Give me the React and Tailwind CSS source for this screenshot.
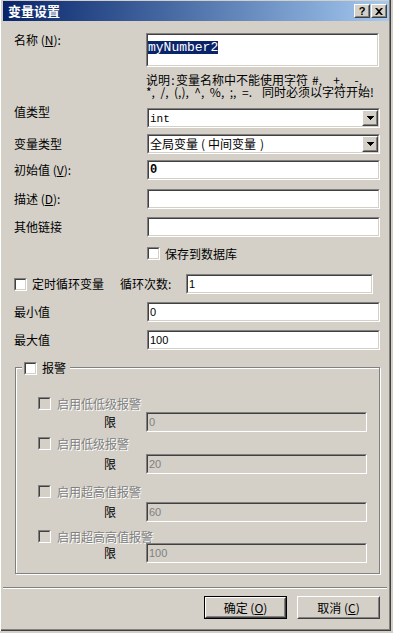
import React from "react";

const Sunken = ({ className = "", bg = "bg-white", innerClass = "", children }) => (
  <div
    className={`shrink-0 border border-t-[#808080] border-l-[#808080] border-r-white border-b-white ${className}`}
  >
    <div
      className={`w-full h-full border border-t-[#404040] border-l-[#404040] border-r-[#d4d0c8] border-b-[#d4d0c8] ${bg} ${innerClass}`}
    >
      {children}
    </div>
  </div>
);

const Raised = ({ className = "", children }) => (
  <div
    className={`shrink-0 bg-[#d4d0c8] border border-t-white border-l-white border-r-[#404040] border-b-[#404040] ${className}`}
  >
    <div className="w-full h-full flex items-center justify-center border border-t-[#d4d0c8] border-l-[#d4d0c8] border-r-[#808080] border-b-[#808080]">
      {children}
    </div>
  </div>
);

const Check = ({ disabled }) => (
  <Sunken className="w-[13px] h-[13px]" bg={disabled ? "bg-[#d4d0c8]" : "bg-white"} />
);

const Arrow = () => (
  <svg width="7" height="4" viewBox="0 0 7 4">
    <path d="M0 0h7v1H0zM1 1h5v1H1zM2 2h3v1H2zM3 3h1v1H3z" fill="#000" />
  </svg>
);

const Combo = ({ children }) => (
  <Sunken className="w-[233px] h-[20px]" innerClass="flex items-center">
    <div className="flex-1 pl-[1px] leading-[14px] whitespace-nowrap">{children}</div>
    <Raised className="w-[16px] h-[16px]">
      <Arrow />
    </Raised>
  </Sunken>
);

const Edit = ({ children, className = "w-[233px]", disabled }) => (
  <Sunken
    className={`h-[20px] ${className}`}
    bg={disabled ? "bg-[#d4d0c8]" : "bg-white"}
    innerClass="flex items-center pl-[1px]"
  >
    {children}
  </Sunken>
);

const sans = "[font-family:'Liberation_Sans',Arial,sans-serif] text-[11px] leading-[13px]";
const mono = "[font-family:'Liberation_Mono',monospace]";
const grey = "text-[#808080] [text-shadow:1px_1px_0_#ffffff]";

const Row = ({ label, mt, children }) => (
  <div className={`flex items-center h-[20px] ${mt}`}>
    <div className="w-[147px] pl-[14px] shrink-0">{label}</div>
    {children}
  </div>
);

const Alarm = ({ label, value, mt, limitMt }) => (
  <>
    <div className={`flex items-center h-[13px] ${mt}`}>
      <Check disabled />
      <span className={`ml-[6px] ${grey}`}>{label}</span>
    </div>
    <div className={`flex items-center h-[20px] ${limitMt}`}>
      <div className="w-[108px] pl-[66px] shrink-0">限</div>
      <Edit className="w-[221px]" disabled>
        <span className={`${sans} text-[#808080]`}>{value}</span>
      </Edit>
    </div>
  </>
);

export default function App() {
  return (
    <div className="w-[393px] h-[633px] bg-[#d4d0c8] overflow-hidden [font-family:'Noto_Sans_CJK_SC','Noto_Sans',sans-serif] text-[12px] leading-[14px] text-black">
      <div className="w-[391px] h-[631px] flex flex-col shadow-[inset_1px_0_0_#ffffff,inset_-1px_-1px_0_#404040,inset_-2px_-2px_0_#808080]">
        {/* title bar */}
        <div className="ml-[3px] mt-[1px] w-[386px] h-[20px] shrink-0 bg-linear-to-r from-[#0a246a] to-[#a6caf0] flex items-center pl-[5px] pr-[2px]">
          <span className="text-white font-bold text-[13px] leading-[16px]">变量设置</span>
          <div className="ml-auto flex">
            <Raised className="w-[16px] h-[14px]">
              <span className="[font-family:'Liberation_Sans',sans-serif] font-bold text-[11px] leading-[11px]">?</span>
            </Raised>
            <Raised className="w-[16px] h-[14px] ml-[1px]">
              <svg width="8" height="7" viewBox="0 0 8 7">
                <path d="M0 0h2l2 2 2-2h2L5 3.5 8 7H6L4 5 2 7H0l3-3.5z" fill="#000" />
              </svg>
            </Raised>
          </div>
        </div>

        {/* name */}
        <div className="mt-[12px] flex h-[34px] shrink-0">
          <div className="w-[146px] pl-[14px] shrink-0">
            名称 (<span className="underline">N</span>):
          </div>
          <Sunken className="w-[233px] h-[34px]">
            <div className="pt-[4px]">
              <span className={`${mono} text-[13px] leading-[13px] bg-[#0a246a] text-white inline-block`}>
                myNumber2
              </span>
            </div>
          </Sunken>
        </div>

        {/* note */}
        <div className="mt-[7px] ml-[146px] w-[232px] leading-[12px] shrink-0 whitespace-nowrap">
          <div className="flex h-[12px]">
            <span className="w-[164px] shrink-0">
              说明<span className="inline-block w-[6px] text-center">:</span>变量名称中不能使用字符
            </span>
            <span className="ml-[2px] w-[50px] flex justify-between">
              <span>#,</span>
              <span>+,</span>
              <span>-,</span>
            </span>
          </div>
          <div className="flex h-[12px]">
            <span className="w-[106px] flex justify-between">
              <span>*,</span>
              <span>/,</span>
              <span>(,),</span>
              <span>^,</span>
              <span>%,</span>
              <span>;,</span>
              <span>=.</span>
            </span>
            <span className="ml-[10px]">同时必须以字符开始!</span>
          </div>
        </div>

        <Row label={<span className="relative top-[-6px]">值类型</span>} mt="mt-[10px]">
          <Combo>
            <span className={`${mono} text-[11px]`}>int</span>
          </Combo>
        </Row>

        <Row label="变量类型" mt="mt-[6px]">
          <Combo>
            全局变量<span className="mx-[3px]">(</span>中间变量<span className="ml-[4px]">)</span>
          </Combo>
        </Row>

        <Row label={<>初始值 (<span className="underline">V</span>):</>} mt="mt-[6px]">
          <Edit>
            <span className={`${mono} font-bold text-[12px] leading-[14px]`}>0</span>
          </Edit>
        </Row>

        <Row label={<>描述 (<span className="underline">D</span>):</>} mt="mt-[9px]">
          <Edit />
        </Row>

        <Row label="其他链接" mt="mt-[8px]">
          <Edit />
        </Row>

        <div className="mt-[10px] ml-[147px] flex items-center h-[13px] shrink-0">
          <Check />
          <span className="ml-[5px]">保存到数据库</span>
        </div>

        {/* timer loop */}
        <div className="mt-[14px] flex items-center h-[20px] shrink-0">
          <div className="ml-[14px]">
            <Check />
          </div>
          <span className="ml-[5px] w-[88px]">定时循环变量</span>
          <span className="w-[66px]">循环次数:</span>
          <Edit className="w-[187px]">
            <span className={sans}>1</span>
          </Edit>
        </div>

        <Row label="最小值" mt="mt-[8px]">
          <Edit>
            <span className={sans}>0</span>
          </Edit>
        </Row>

        <Row label="最大值" mt="mt-[8px]">
          <Edit>
            <span className={sans}>100</span>
          </Edit>
        </Row>

        {/* alarm group */}
        <div className="mt-[17px] ml-[15px] w-[365px] h-[207px] shrink-0 relative border border-[#808080] shadow-[inset_1px_1px_0_#ffffff,1px_1px_0_#ffffff] pt-[29px] pl-[22px]">
          <div className="absolute left-[6px] top-[-7px] flex items-center bg-[#d4d0c8] pl-[2px] pr-[4px] h-[14px]">
            <Check />
            <span className="ml-[5px]">报警</span>
          </div>
          <Alarm label="启用低低级报警" value="0" mt="" limitMt="mt-[2px]" />
          <Alarm label="启用低级报警" value="20" mt="mt-[5px]" limitMt="mt-[4px]" />
          <Alarm label="启用超高值报警" value="60" mt="mt-[11px]" limitMt="mt-[4px]" />
          <Alarm label="启用超高高值报警" value="100" mt="mt-[8px]" limitMt="mt-[0px]" />
        </div>

        {/* separator */}
        <div className="mt-[13px] ml-[3px] w-[384px] h-[2px] shrink-0 border-t border-t-[#808080] border-b border-b-white" />

        {/* buttons */}
        <div className="mt-[7px] ml-[204px] flex shrink-0">
          <div className="w-[83px] h-[23px] border border-black">
            <Raised className="w-full h-full">
              确定 (<span className="underline">O</span>)
            </Raised>
          </div>
          <Raised className="w-[83px] h-[23px] ml-[10px]">
            取消 (<span className="underline">C</span>)
          </Raised>
        </div>
      </div>
    </div>
  );
}
